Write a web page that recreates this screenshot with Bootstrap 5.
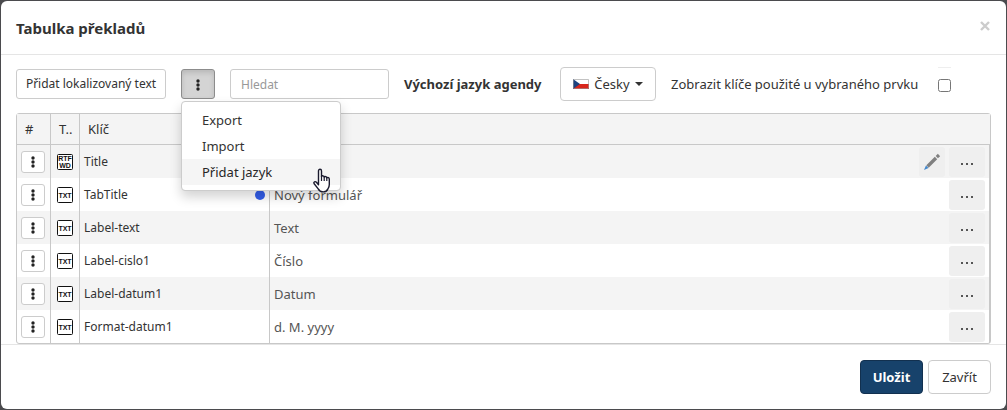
<!DOCTYPE html>
<html lang="cs">
<head>
<meta charset="utf-8">
<meta name="viewport" content="width=device-width, initial-scale=1">
<title>Tabulka překladů</title>
<link href="https://cdn.jsdelivr.net/npm/bootstrap@5.3.0/dist/css/bootstrap.min.css" rel="stylesheet">
<style>
  body { background: #4b4b4e; font-family: "Noto Sans", "Open Sans", sans-serif; font-size: 13px; line-height: 20px; color: #333; }
  .dialog { background: #fff; border-radius: 6px; margin: 1px; }
  .dialog-head { height: 54px; padding: 0 15px; border-bottom: 1px solid #e5e5e5; }
  .dialog-title { font-size: 15px; font-weight: 700; line-height: 20px; }
  .dialog-close { border: 0; background: none; color: #ccc; padding: 0; display: flex; }
  .dialog-main { padding: 0 15px; }
  .dialog-foot { border-top: 1px solid #e5e5e5; padding: 15px; gap: 5px; }
  .btn { font-size: 13px; line-height: 20px; border-radius: 4px; padding: 6px 12px; }
  .btn-plain { --bs-btn-bg: #fff; --bs-btn-color: #333; --bs-btn-border-color: #ccc; --bs-btn-hover-bg: #eee; --bs-btn-hover-border-color: #aaa; }
  .btn-save { --bs-btn-bg: #17426b; --bs-btn-color: #fff; --bs-btn-border-color: #12304f; --bs-btn-hover-bg: #12304f; --bs-btn-hover-color: #fff; font-weight: 700; }
  .btn-short { font-size: 12px; line-height: 18px; padding: 5px 0; border-radius: 3px; }
  .btn-add { width: 150px; }
  .btn-more { width: 34px; }
  .btn-more.show { background: #d4d4d4; border-color: #8c8c8c; box-shadow: inset 0 3px 5px rgba(0,0,0,.125); }
  .btn-lang { width: 96px; padding: 6px 0; gap: 5px; }
  .btn-foot { width: 63px; padding-left: 0; padding-right: 0; }
  .toolbar { padding: 12px 0; min-height: 58px; gap: 15px; }
  .search-box { width: 159px; height: 30px; font-size: 12px; padding: 4px 10px; border-color: #ccc; border-radius: 3px; }
  .search-box::placeholder { color: #999; }
  .lang-label { width: 141px; }
  .used-label { width: 259px; }
  .tick-wrap { border-top: 1px solid #eee; height: 34px; padding-top: 11px; }
  .tick-wrap input { width: 13px; height: 13px; margin: 0; display: block; }
  .caret { border: 4px solid transparent; border-top-color: #333; border-bottom: 0; }
  .menu { top: 32px; left: 0; width: 160px; min-width: 0; padding: 5px 0; font-size: 13px; border: 1px solid #ccc; border-radius: 4px; box-shadow: 0 6px 12px rgba(0,0,0,.175); }
  .menu .dropdown-item { padding: 3px 20px; line-height: 20px; color: #333; }
  .menu .dropdown-item.current { background: #f5f5f5; color: #262626; }
  .pointer { position: absolute; left: 130px; top: 66px; pointer-events: none; }
  .grid-frame { border: 1px solid #c8c8c8; border-radius: 3px; }
  .grid-table { width: 100%; table-layout: fixed; border-collapse: separate; border-spacing: 0; }
  .grid-table th { height: 31px; background: #f4f4f4; border-bottom: 1px solid #c8c8c8; font-weight: 400; padding: 0 8px; white-space: nowrap; }
  .grid-table td { height: 33px; padding: 0 4px; white-space: nowrap; }
  .grid-table tbody tr:nth-child(odd) td { background: #f4f4f4; }
  .grid-table .ruled { border-right: 1px solid #c8c8c8; }
  .grid-table tbody td:last-child { border-right: 1px solid #c8c8c8; }
  .col-menu { width: 34px; }
  .col-kind { width: 29px; }
  .col-key { width: 190px; }
  .key { font-size: 12px; }
  .value { color: #555; }
  .row-btn { width: 24px; height: 22px; padding: 0; border-radius: 3px; display: flex; align-items: center; justify-content: center; }
  .soft-btn { height: 30px; border: 0; border-radius: 3px; background: #efefef; color: #333; padding: 0; display: flex; align-items: center; justify-content: center; }
  .soft-dots { width: 36px; padding-top: 5px; }
  .soft-edit { width: 26px; }
  .dot { width: 10px; height: 10px; border-radius: 50%; background: #335eea; }
  .kind-icon { font-family: "Liberation Sans", sans-serif; font-size: 7px; font-weight: 700; fill: #111; }
</style>
</head>
<body>
<svg width="0" height="0" class="position-absolute" aria-hidden="true">
  <symbol id="dots" viewBox="0 0 4 12"><g fill="#222"><circle cx="2" cy="2" r="1.7"/><circle cx="2" cy="6" r="1.7"/><circle cx="2" cy="10" r="1.7"/></g></symbol>
  <symbol id="ellipsis" viewBox="0 0 12 2"><path d="M0 0h2v2H0zM5 0h2v2H5zM10 0h2v2h-2z" fill="#555"/></symbol>
</svg>
<main class="dialog" role="dialog" aria-labelledby="title">
  <header class="dialog-head d-flex align-items-center justify-content-between">
    <h1 class="dialog-title m-0" id="title">Tabulka překladů</h1>
    <button type="button" class="dialog-close" aria-label="Zavřít okno"><svg width="12" height="14" viewBox="0 0 12 14"><path d="M2 1l8 8M10 1l-8 8" stroke="#ccc" stroke-width="2.400"/></svg></button>
  </header>
  <section class="dialog-main">
    <div class="toolbar d-flex align-items-center">
      <button type="button" class="btn btn-plain btn-short btn-add text-nowrap">Přidat lokalizovaný text</button>
      <div class="dropdown">
        <button type="button" class="btn btn-plain btn-short btn-more show d-block" aria-label="Další akce" aria-expanded="true"><svg width="4" height="12"><use href="#dots"/></svg></button>
        <div class="dropdown-menu menu show">
          <a class="dropdown-item" href="#">Export</a>
          <a class="dropdown-item" href="#">Import</a>
          <a class="dropdown-item current" href="#">Přidat jazyk</a>
          <svg class="pointer" width="20" height="26" viewBox="0 0 20 26"><path d="M6.500 3c0-2.300 3-2.300 3 0v5.500c.6-1.100 2.500-.8 2.700.5.700-.8 2.400-.5 2.600.8.900-.7 2.500-.2 2.500 1.400v5.300c0 2.300-.9 3.300-1.500 4.600-.9 2-2.500 2.800-4.600 2.800-2.600 0-4-1-5-3L2 15.500c-.7-1.600 1.200-2.600 2.400-1.200l2.100 2.500z" fill="#fff" stroke="#1a1a2e" stroke-width="1.400" stroke-linejoin="round"/><path d="M9.500 8v5M12.200 9v4M14.800 10v3" stroke="#1a1a2e" stroke-width="1.200"/></svg>
        </div>
      </div>
      <input type="search" class="form-control search-box" placeholder="Hledat" aria-label="Hledat">
      <strong class="lang-label text-nowrap">Výchozí jazyk agendy</strong>
      <button type="button" class="btn btn-plain btn-lang d-flex align-items-center justify-content-center" aria-haspopup="true"><svg class="flex-shrink-0" width="16" height="10" viewBox="0 0 16 10"><path d="M0 0h16v5H0z" fill="#fff"/><path d="M0 5h16v5H0z" fill="#d9261c"/><path d="M0 0l7 5-7 5z" fill="#1d4380"/><path d="M.5.5h15v9H.5z" fill="none" stroke="#999" stroke-opacity=".6"/></svg><span>Česky</span><span class="caret"></span></button>
      <div class="d-flex align-items-center gap-2">
        <label class="used-label text-nowrap" for="used">Zobrazit klíče použité u vybraného prvku</label>
        <span class="tick-wrap"><input type="checkbox" id="used"></span>
      </div>
    </div>
    <div class="grid-frame">
      <table class="grid-table">
        <colgroup><col class="col-menu"><col class="col-kind"><col class="col-key"><col></colgroup>
        <thead><tr><th class="ruled">#</th><th class="ruled">T..</th><th class="ruled">Klíč</th><th></th></tr></thead>
        <tbody id="rows"></tbody>
      </table>
    </div>
  </section>
  <footer class="dialog-foot d-flex justify-content-end">
    <button type="button" class="btn btn-save btn-foot">Uložit</button>
    <button type="button" class="btn btn-plain btn-foot">Zavřít</button>
  </footer>
</main>
<script src="https://cdn.jsdelivr.net/npm/bootstrap@5.3.0/dist/js/bootstrap.bundle.min.js"></script>
<script>
  const iconText = {
    txt: '<text x="8" y="11" text-anchor="middle">TXT</text>',
    rtf: '<text x="8" y="7" text-anchor="middle">RTF</text><text x="8" y="14" text-anchor="middle">WD</text>'
  };
  const pencil = '<button type="button" class="soft-btn soft-edit" aria-label="Upravit"><svg width="18" height="18" viewBox="0 0 18 18"><path d="M4.500 13.500L13 5" stroke="#808080" stroke-width="3.400"/><path d="M13.800 4.200L16 2" stroke="#808080" stroke-width="3.200"/><path d="M3 12.500l2.500 2.500L1 17z" fill="#4287cc"/></svg></button>';
  const rows = [
    ['rtf', 'Title', '', false],
    ['txt', 'TabTitle', 'Nový formulář', true],
    ['txt', 'Label-text', 'Text', false],
    ['txt', 'Label-cislo1', 'Číslo', false],
    ['txt', 'Label-datum1', 'Datum', false],
    ['txt', 'Format-datum1', 'd. M. yyyy', false]
  ];
  document.getElementById('rows').innerHTML = rows.map(([kind, key, value, marked]) => `<tr>
    <td class="ruled"><button type="button" class="btn btn-plain row-btn" aria-label="Akce"><svg width="4" height="12"><use href="#dots"/></svg></button></td>
    <td class="ruled"><svg class="kind-icon d-block mx-auto" width="16" height="16" viewBox="0 0 16 16"><rect x=".5" y=".5" width="15" height="15" rx="1" fill="#fff" stroke="#111"/>${iconText[kind]}</svg></td>
    <td class="ruled key"><div class="d-flex align-items-center justify-content-between"><span>${key}</span>${marked ? '<span class="dot"></span>' : ''}</div></td>
    <td class="value"><div class="d-flex align-items-center gap-1"><span class="me-auto">${value}</span>${kind === 'rtf' ? pencil : ''}<button type="button" class="soft-btn soft-dots" aria-label="Více"><svg width="12" height="2"><use href="#ellipsis"/></svg></button></div></td>
  </tr>`).join('');
</script>
</body>
</html>
